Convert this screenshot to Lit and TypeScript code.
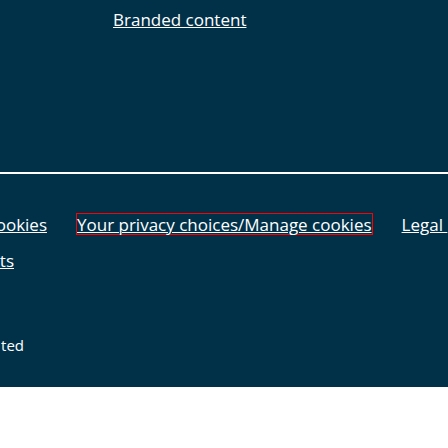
import { LitElement, html, css } from "lit";
import { customElement } from "lit/decorators.js";

@customElement("app-root")
class AppRoot extends LitElement {
  static styles = css`
    :host {
      display: block;
      min-height: 100vh;
      overflow: hidden;
      background: #fff;
      color: #fff;
      font: 17px/24px "Open Sans", "Noto Sans", sans-serif;
    }
    .footer {
      background: #003149;
    }
    .topics {
      padding: 9px 0 143px 113px;
      border-bottom: 2px solid #fff;
    }
    .legal {
      padding: 39px 0 30px;
    }
    .row {
      display: flex;
      align-items: center;
      gap: 29px;
      height: 22px;
      margin-bottom: 14px;
      white-space: nowrap;
    }
    .first {
      flex: none;
      width: 47px;
      display: flex;
      justify-content: flex-end;
    }
    .short {
      width: 14px;
    }
    a {
      display: block;
      height: 20px;
      color: inherit;
      line-height: 22px;
      text-decoration: underline;
      text-decoration-thickness: 1px;
      text-underline-offset: 1px;
    }
    .marked {
      flex: none;
      border: 1px solid #f00;
    }
    .company {
      display: flex;
      justify-content: flex-end;
      width: 24px;
      margin: 62px 0 0;
      font-size: 15px;
      line-height: 24px;
    }
  `;

  render() {
    return html`
      <footer class="footer">
        <nav class="topics"><a href="#branded">Branded content</a></nav>
        <div class="legal">
          <nav>
            <div class="row">
              <span class="first"><a href="#cookies">ookies</a></span>
              <a class="marked" href="#choices">Your privacy choices/Manage cookies</a>
              <a href="#legal">Legal&nbsp;</a>
            </div>
            <div class="row">
              <span class="first short"><a href="#last">ts</a></span>
            </div>
          </nav>
          <p class="company">ted</p>
        </div>
      </footer>
    `;
  }
}
